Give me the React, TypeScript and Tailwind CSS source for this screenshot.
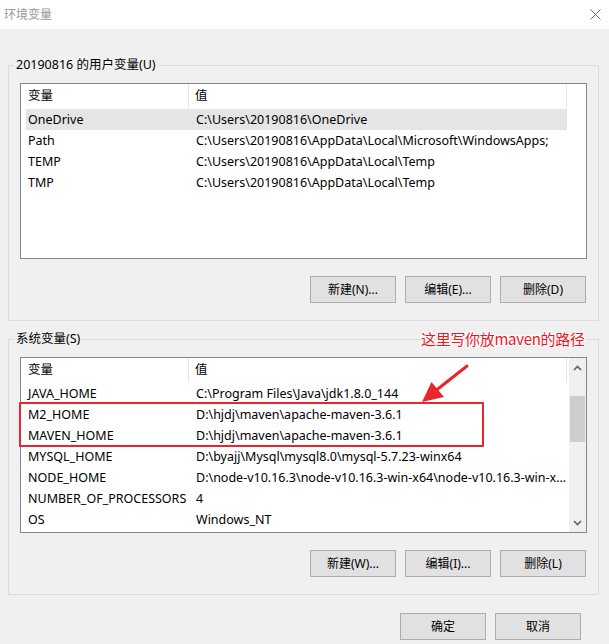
import React from "react";

const userVars: [string, string][] = [
  ["OneDrive", "C:\\Users\\20190816\\OneDrive"],
  ["Path", "C:\\Users\\20190816\\AppData\\Local\\Microsoft\\WindowsApps;"],
  ["TEMP", "C:\\Users\\20190816\\AppData\\Local\\Temp"],
  ["TMP", "C:\\Users\\20190816\\AppData\\Local\\Temp"],
];

const sysVars: [string, string][] = [
  ["JAVA_HOME", "C:\\Program Files\\Java\\jdk1.8.0_144"],
  ["M2_HOME", "D:\\hjdj\\maven\\apache-maven-3.6.1"],
  ["MAVEN_HOME", "D:\\hjdj\\maven\\apache-maven-3.6.1"],
  ["MYSQL_HOME", "D:\\byajj\\Mysql\\mysql8.0\\mysql-5.7.23-winx64"],
  ["NODE_HOME", "D:\\node-v10.16.3\\node-v10.16.3-win-x64\\node-v10.16.3-win-x..."],
  ["NUMBER_OF_PROCESSORS", "4"],
  ["OS", "Windows_NT"],
];

function Btn({ label }: { label: string }) {
  return (
    <button className="w-[86px] h-[27px] bg-[#e1e1e1] border border-[#adadad] flex items-center justify-center text-[12px] text-black">
      {label}
    </button>
  );
}

function Header() {
  return (
    <div className="flex h-[25px] bg-white text-[12.5px]">
      <div className="w-[168px] h-[24px] flex items-center pl-[7px] pt-[1px] border-r border-[#e5e5e5]">变量</div>
      <div className="w-[378px] h-[24px] flex items-center pl-[6px] pt-[1px] border-r border-[#e5e5e5]">值</div>
    </div>
  );
}

function Rows({ rows, selected }: { rows: [string, string][]; selected?: number }) {
  return (
    <div className="flex flex-col text-[12.5px]">
      {rows.map(([k, v], i) => (
        <div
          key={k}
          className={`flex h-[21px] items-center pt-[1px] ml-[5px] w-[541px] ${i === selected ? "bg-[#e5e5e5]" : ""}`}
        >
          <div className="w-[164px] pl-[2px] whitespace-nowrap overflow-hidden">{k}</div>
          <div className="flex-1 pl-[6px] whitespace-nowrap overflow-hidden">{v}</div>
        </div>
      ))}
    </div>
  );
}

function Chevron({ up }: { up?: boolean }) {
  return (
    <svg width="9" height="6" viewBox="0 0 9 6">
      <path
        d={up ? "M1 5 L4.5 1.5 L8 5" : "M1 1 L4.5 4.5 L8 1"}
        fill="none"
        stroke="#606060"
        strokeWidth="1.6"
      />
    </svg>
  );
}

export default function App() {
  return (
    <div className="relative w-[609px] h-[644px] bg-[#f0f0f0] overflow-hidden text-[12px] text-black font-['Noto_Sans','Noto_Sans_CJK_SC',sans-serif]">
      {/* title bar */}
      <div className="h-[29px] bg-white flex items-center justify-between pl-[4px] pr-[8px]">
        <span className="text-[#999999] text-[12px]">环境变量</span>
        <svg width="11" height="11" viewBox="0 0 11 11">
          <path d="M0.5 0.5 L10.5 10.5 M10.5 0.5 L0.5 10.5" stroke="#707070" strokeWidth="1" />
        </svg>
      </div>

      <div className="pl-[8px] pr-[10px] pt-[27px] flex flex-col">
        {/* user variables */}
        <fieldset className="border border-[#dcdcdc] px-[11px] pt-[9px] pb-[17px]">
          <legend className="-ml-[6px] px-[2px] leading-[18px] text-[12.5px]">20190816 的用户变量(U)</legend>
          <div className="h-[176px] border border-[#828790] bg-white">
            <Header />
            <Rows rows={userVars} selected={0} />
          </div>
          <div className="flex justify-end gap-[9px] mt-[17px] mr-[1px]">
            <Btn label="新建(N)..." />
            <Btn label="编辑(E)..." />
            <Btn label="删除(D)" />
          </div>
        </fieldset>

        {/* system variables */}
        <fieldset className="mt-[9px] border border-[#dcdcdc] px-[11px] pt-[9px] pb-[17px]">
          <legend className="-ml-[6px] px-[2px] leading-[18px] text-[12.5px]">系统变量(S)</legend>
          <div className="h-[176px] border border-[#828790] bg-white flex">
            <div className="flex-1 flex flex-col">
              <Header />
              <Rows rows={sysVars} />
            </div>
            <div className="w-[17px] bg-[#f0f0f0] flex flex-col">
              <div className="h-[17px] flex items-center justify-center pt-[3px]">
                <Chevron up />
              </div>
              <div className="mt-[21px] h-[46px] mx-[1px] bg-[#cdcdcd]" />
              <div className="flex-1" />
              <div className="h-[17px] flex items-center justify-center pb-[1px]">
                <Chevron />
              </div>
            </div>
          </div>
          <div className="flex justify-end gap-[9px] mt-[17px] mr-[1px]">
            <Btn label="新建(W)..." />
            <Btn label="编辑(I)..." />
            <Btn label="删除(L)" />
          </div>
        </fieldset>

        <div className="flex justify-end gap-[9px] mt-[18px] mr-[18px]">
          <Btn label="确定" />
          <Btn label="取消" />
        </div>
      </div>

      {/* annotation overlays */}
      <div className="absolute left-[421px] top-[329px] text-[15px] tracking-[-0.3px] leading-[20px] text-[#f0141e] whitespace-nowrap font-['Noto_Sans_CJK_SC',sans-serif] [text-shadow:1px_0_#fff,-1px_0_#fff,0_1px_#fff,0_-1px_#fff,1px_1px_#fff,-1px_-1px_#fff,1px_-1px_#fff,-1px_1px_#fff]">
        这里写你放maven的路径
      </div>
      <div className="absolute left-[19px] top-[402px] w-[465px] h-[45px] border-2 border-[#e8262c] rounded-[1px]" />
      <svg className="absolute left-0 top-0 pointer-events-none" width="609" height="644" viewBox="0 0 609 644">
        <line x1="467" y1="366" x2="434" y2="392" stroke="#e8262c" strokeWidth="3" strokeLinecap="round" />
        <polygon points="422,402 431.5,382 444,397" fill="#e8262c" />
      </svg>
    </div>
  );
}
